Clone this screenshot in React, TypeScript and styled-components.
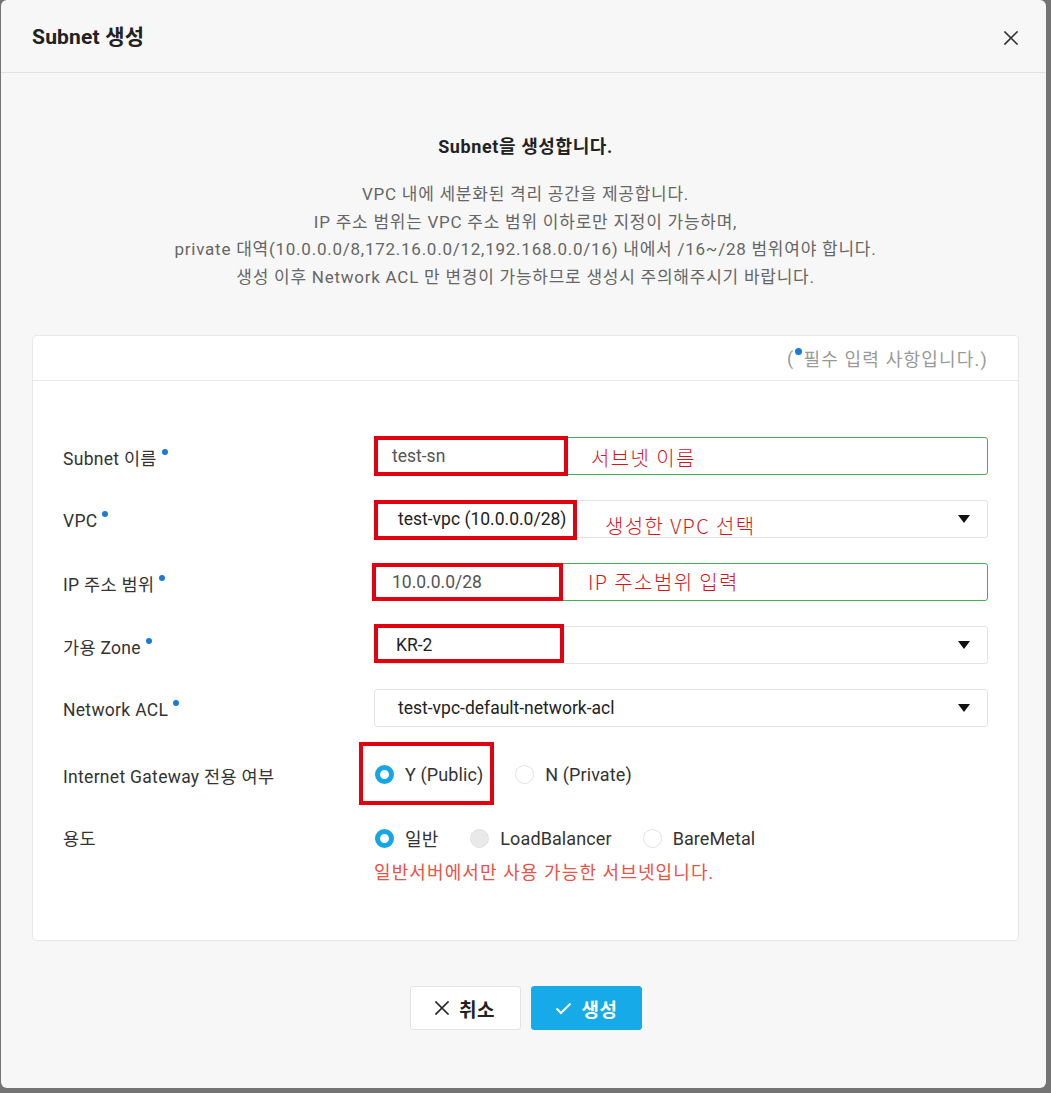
import React from "react";
import styled, { createGlobalStyle } from "styled-components";

const Global = createGlobalStyle`
  html, body { margin: 0; padding: 0; }
  body {
    background: #747474;
    font-family: Roboto, "Noto Sans CJK KR", sans-serif;
    color: #333;
  }
  * { box-sizing: border-box; }
`;

const Modal = styled.div`
  width: 1045px;
  height: 1088px;
  margin-left: 1px;
  background: #f7f7f7;
  border-radius: 6px;
  display: flex;
  flex-direction: column;
  overflow: hidden;
`;

const Header = styled.div`
  height: 73px;
  border-bottom: 1px solid #e2e2e2;
  display: flex;
  align-items: center;
  justify-content: space-between;
  padding: 0 27px 0 31px;
`;

const Title = styled.h1`
  margin: 0;
  font-size: 21px;
  font-weight: 700;
  color: #222;
  letter-spacing: 0.2px;
  position: relative;
  top: -1px;
`;

const CloseButton = styled.button`
  border: 0;
  background: transparent;
  padding: 0;
  width: 16px;
  height: 16px;
  display: flex;
  align-items: center;
  justify-content: center;
  cursor: pointer;
  position: relative;
  top: 2px;
`;

const Body = styled.div`
  padding: 0 27px 0 31px;
  display: flex;
  flex-direction: column;
`;

const Lead = styled.p`
  margin: 62px 0 0;
  text-align: center;
  font-size: 18px;
  font-weight: 700;
  color: #222;
  line-height: 24px;
  letter-spacing: 0.6px;
`;

const Desc = styled.p`
  margin: 22px 0 0;
  text-align: center;
  font-size: 17px;
  color: #666;
  line-height: 27.5px;
  letter-spacing: 0.75px;
`;

const Card = styled.div`
  margin-top: 44px;
  background: #fff;
  border: 1px solid #e8e8e8;
  border-radius: 4px;
`;

const CardHeader = styled.div`
  height: 45px;
  border-bottom: 1px solid #e8e8e8;
  display: flex;
  align-items: center;
  justify-content: flex-end;
  padding-right: 30px;
  font-size: 18px;
  letter-spacing: 1.2px;
  color: #999;
`;

const HeaderDot = styled.span`
  display: inline-block;
  width: 7px;
  height: 7px;
  border-radius: 50%;
  background: #1a7bd6;
  margin: 0 1px 0 1px;
  position: relative;
  top: -7px;
`;

const CardBody = styled.div`
  padding: 56px 30px 55px 30px;
  display: flex;
  flex-direction: column;
`;

const Row = styled.div<{ $mb?: number; $h?: number; $align?: string }>`
  display: flex;
  align-items: ${(p) => p.$align || "center"};
  min-height: ${(p) => p.$h || 38}px;
  margin-bottom: ${(p) => (p.$mb === undefined ? 25 : p.$mb)}px;
`;

const Label = styled.div<{ $lh?: number }>`
  width: 311px;
  flex-shrink: 0;
  font-size: 17.5px;
  color: #333;
  letter-spacing: 0.3px;
  line-height: ${(p) => (p.$lh ? `${p.$lh}px` : "normal")};
  padding-top: 3px;
`;

const ReqDot = styled.span`
  display: inline-block;
  width: 6px;
  height: 6px;
  border-radius: 50%;
  background: #1a7bd6;
  margin-left: 5px;
  position: relative;
  top: -10px;
`;

const Field = styled.div`
  flex: 1;
  position: relative;
`;

const InputBox = styled.div<{ $valid?: boolean; $pl?: number }>`
  height: 38px;
  border: 1px solid ${(p) => (p.$valid ? "#3fb24f" : "#e3e3e3")};
  border-radius: 3px;
  background: #fff;
  display: flex;
  align-items: center;
  padding: 0 17px 0 ${(p) => p.$pl || 17}px;
  font-size: 17.5px;
  color: #333;
  position: relative;
`;

const Value = styled.span<{ $dark?: boolean }>`
  flex: 1;
  color: ${(p) => (p.$dark ? "#222" : "#555")};
`;

const Caret = styled.span`
  width: 0;
  height: 0;
  border-left: 6px solid transparent;
  border-right: 6px solid transparent;
  border-top: 8px solid #111;
`;

const Annotation = styled.span<{ $left: number; $top?: number }>`
  position: absolute;
  left: ${(p) => p.$left}px;
  top: ${(p) => (p.$top === undefined ? 4 : p.$top)}px;
  font-family: "Noto Sans CJK KR", sans-serif;
  font-weight: 300;
  font-size: 20px;
  color: #d8141c;
  letter-spacing: 1.4px;
  white-space: nowrap;
`;

const RedBox = styled.div<{ $l: number; $t: number; $w: number; $hh: number }>`
  position: absolute;
  left: ${(p) => p.$l}px;
  top: ${(p) => p.$t}px;
  width: ${(p) => p.$w}px;
  height: ${(p) => p.$hh}px;
  border: 4px solid #e3000f;
  pointer-events: none;
`;

const RadioGroup = styled.div`
  display: flex;
  align-items: center;
  height: 38px;
  position: relative;
`;

const RadioItem = styled.label<{ $mr: number }>`
  display: flex;
  align-items: center;
  margin-right: ${(p) => p.$mr}px;
  font-size: 18px;
  letter-spacing: 0.1px;
  color: #333;
  padding-left: 1px;
`;

const RadioCircle = styled.span<{ $state: "on" | "off" | "disabled" }>`
  width: 19px;
  height: 19px;
  border-radius: 50%;
  margin-right: 11px;
  flex-shrink: 0;
  background: ${(p) => (p.$state === "disabled" ? "#e9e9e9" : "#fff")};
  border: ${(p) =>
    p.$state === "on"
      ? "5.5px solid #16a6e6"
      : p.$state === "disabled"
      ? "1px solid #e0e0e0"
      : "1px solid #e3e3e3"};
`;

const Note = styled.div`
  margin-top: 4px;
  font-size: 18px;
  line-height: 24px;
  letter-spacing: 1.1px;
  color: #ec5144;
`;

const Footer = styled.div`
  display: flex;
  justify-content: center;
  gap: 10px;
  margin-top: 45px;
`;

const Btn = styled.button<{ $primary?: boolean }>`
  width: 111px;
  height: 44px;
  border-radius: 3px;
  border: 1px solid ${(p) => (p.$primary ? "#17aae9" : "#e3e3e3")};
  background: ${(p) => (p.$primary ? "#17aae9" : "#fff")};
  color: ${(p) => (p.$primary ? "#fff" : "#222")};
  font-family: Roboto, "Noto Sans CJK KR", sans-serif;
  font-size: 19px;
  font-weight: 700;
  letter-spacing: 0.5px;
  display: flex;
  align-items: center;
  justify-content: center;
  gap: 10px;
  cursor: pointer;
  padding: 0;
`;

const CloseIcon = ({ size = 14, color = "#333", w = 1.6 }: { size?: number; color?: string; w?: number }) => (
  <svg width={size} height={size} viewBox="0 0 14 14">
    <path d="M1 1 L13 13 M13 1 L1 13" stroke={color} strokeWidth={w} strokeLinecap="square" />
  </svg>
);

const CheckIcon = () => (
  <svg width="17" height="13" viewBox="0 0 17 13">
    <path d="M1.5 6.5 L6 11 L15.5 1.5" stroke="#fff" strokeWidth="2" fill="none" />
  </svg>
);

export default function App() {
  return (
    <>
      <Global />
      <Modal>
        <Header>
          <Title>Subnet 생성</Title>
          <CloseButton aria-label="close">
            <CloseIcon />
          </CloseButton>
        </Header>
        <Body>
          <Lead>Subnet을 생성합니다.</Lead>
          <Desc>
            VPC 내에 세분화된 격리 공간을 제공합니다.
            <br />
            IP 주소 범위는 VPC 주소 범위 이하로만 지정이 가능하며,
            <br />
            private 대역(10.0.0.0/8,172.16.0.0/12,192.168.0.0/16) 내에서 /16~/28 범위여야 합니다.
            <br />
            생성 이후 Network ACL 만 변경이 가능하므로 생성시 주의해주시기 바랍니다.
          </Desc>
          <Card>
            <CardHeader>
              (<HeaderDot />필수 입력 사항입니다.)
            </CardHeader>
            <CardBody>
              <Row>
                <Label>
                  Subnet 이름<ReqDot />
                </Label>
                <Field>
                  <InputBox $valid>
                    <Value>test-sn</Value>
                    <Annotation $left={216} $top={5}>서브넷 이름</Annotation>
                  </InputBox>
                  <RedBox $l={0} $t={-1} $w={194} $hh={40} />
                </Field>
              </Row>
              <Row>
                <Label>
                  VPC<ReqDot />
                </Label>
                <Field>
                  <InputBox $pl={23}>
                    <Value $dark>test-vpc (10.0.0.0/28)</Value>
                    <Caret />
                    <Annotation $left={230} $top={10}>생성한 VPC 선택</Annotation>
                  </InputBox>
                  <RedBox $l={0} $t={0} $w={203} $hh={40} />
                </Field>
              </Row>
              <Row>
                <Label>
                  IP 주소 범위<ReqDot />
                </Label>
                <Field>
                  <InputBox $valid>
                    <Value>10.0.0.0/28</Value>
                    <Annotation $left={213} $top={3}>IP 주소범위 입력</Annotation>
                  </InputBox>
                  <RedBox $l={-2} $t={0} $w={191} $hh={38} />
                </Field>
              </Row>
              <Row>
                <Label>
                  가용 Zone<ReqDot />
                </Label>
                <Field>
                  <InputBox $pl={21}>
                    <Value $dark>KR-2</Value>
                    <Caret />
                  </InputBox>
                  <RedBox $l={0} $t={-2} $w={190} $hh={39} />
                </Field>
              </Row>
              <Row>
                <Label>
                  Network ACL<ReqDot />
                </Label>
                <Field>
                  <InputBox $pl={23}>
                    <Value $dark>test-vpc-default-network-acl</Value>
                    <Caret />
                  </InputBox>
                </Field>
              </Row>
              <Row $h={44} $mb={23}>
                <Label>Internet Gateway 전용 여부</Label>
                <Field>
                  <RadioGroup>
                    <RadioItem $mr={31}>
                      <RadioCircle $state="on" />
                      Y (Public)
                    </RadioItem>
                    <RadioItem $mr={0}>
                      <RadioCircle $state="off" />
                      N (Private)
                    </RadioItem>
                    <RedBox $l={-15} $t={-13} $w={135} $hh={63} />
                  </RadioGroup>
                </Field>
              </Row>
              <Row $mb={0} $align="flex-start">
                <Label $lh={34}>용도</Label>
                <Field>
                  <RadioGroup>
                    <RadioItem $mr={31}>
                      <RadioCircle $state="on" />
                      일반
                    </RadioItem>
                    <RadioItem $mr={30}>
                      <RadioCircle $state="disabled" />
                      LoadBalancer
                    </RadioItem>
                    <RadioItem $mr={0}>
                      <RadioCircle $state="off" />
                      BareMetal
                    </RadioItem>
                  </RadioGroup>
                  <Note>일반서버에서만 사용 가능한 서브넷입니다.</Note>
                </Field>
              </Row>
            </CardBody>
          </Card>
          <Footer>
            <Btn>
              <CloseIcon size={14} color="#222" w={1.6} />
              취소
            </Btn>
            <Btn $primary>
              <CheckIcon />
              생성
            </Btn>
          </Footer>
        </Body>
      </Modal>
    </>
  );
}
